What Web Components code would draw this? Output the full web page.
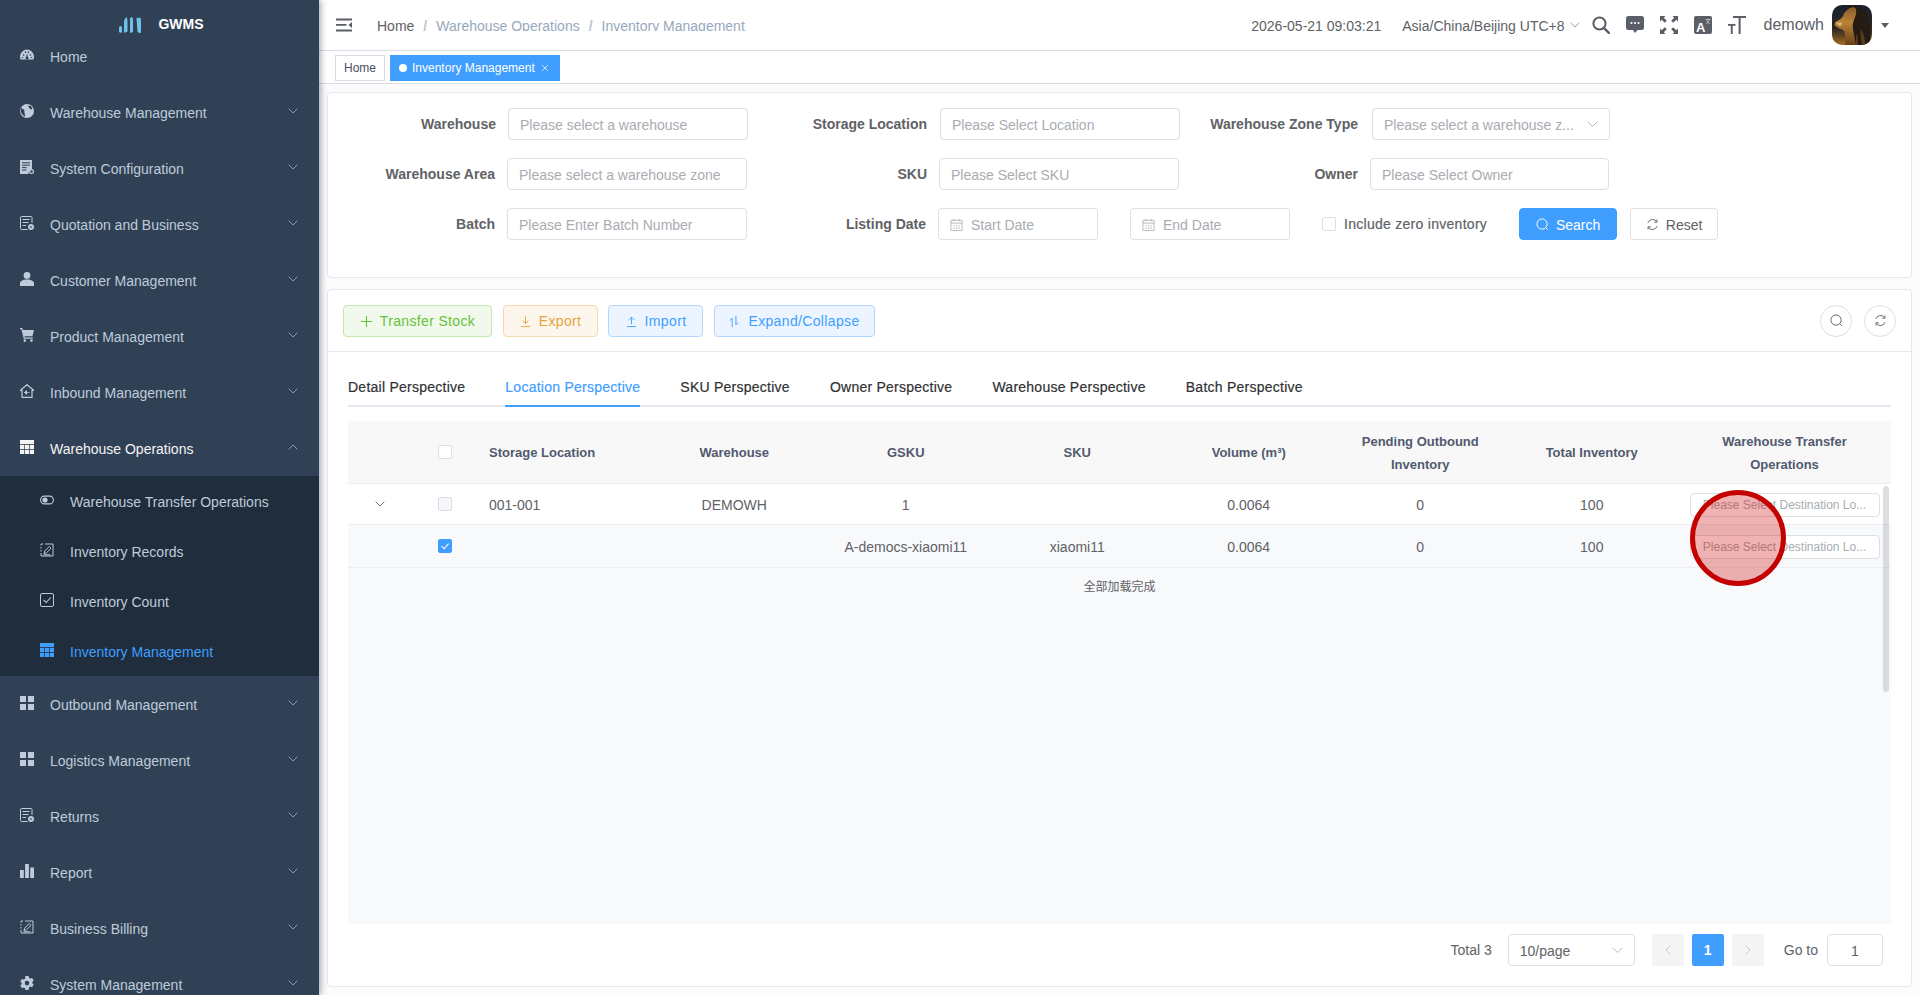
<!DOCTYPE html>
<html lang="en">
<head>
<meta charset="utf-8">
<title>GWMS - Inventory Management</title>
<style>
  html, body { margin: 0; height: 100%; overflow: hidden; }
  body { font-family: "Liberation Sans", "Noto Sans CJK SC", sans-serif; font-size: 14px; color: #606266; }
</style>
</head>
<body>
<gw-app></gw-app>

<script>
const ICONS = {
  gauge: [14, 14, '<path d="M7 1.600a7 7 0 0 0-7 7c0 1.100.2 2 .6 3h12.800c.4-1 .6-1.900.6-3a7 7 0 0 0-7-7z"/><path d="M7 11V6.500M3 6.500l1.200 1M11 6.500 9.800 7.500M1.800 9.500h1.400M10.800 9.500h1.400M5.300 3.400 5.800 5M8.700 3.400 8.200 5" stroke="#304156" stroke-width="1.100"/><circle cx="7" cy="10" r="1.500" fill="#304156"/>'],
  globe: [14, 14, '<circle cx="7" cy="7" r="7"/><path d="M3.800 1.200C2.800 2 1.700 3 1.600 3.700c0 .8 1 1.200 1.800 1.600 1 .5 1.200 1.300 1 2.200-.2 1 .2 1.800.5 2.700.2.700.2 1.500.1 2.300C2.800 11.300 1 9.300.7 7 .4 4.700 1.700 2.400 3.800 1.200zM8.200 1.600c.8.400 1.600.500 2.400.200.800.800 1.500 2 1.700 3.300-.8.400-1.700.300-2.300-.400-.7-.8-1.900-1.500-1.800-3.100z" fill="#304156"/>'],
  server: [14, 14, '<path d="M0 0h12v9.500a4 4 0 0 0-3.500 4.500H0z"/><path d="M2 2.800h8M2 5.200h8M2 7.600h4.500M2 10h4.500" stroke="#304156" stroke-width="1"/><circle cx="11.500" cy="11.500" r="1.900" fill="none" stroke="currentColor" stroke-width="1.200"/>'],
  bill: [14, 14, '<path d="M7.500 13.500H1.500a1 1 0 0 1-1-1v-11a1 1 0 0 1 1-1h9.500a1 1 0 0 1 1 1V7" fill="none" stroke="currentColor"/><path d="M2.500 3.500h7M2.500 6.500h6M2.500 9.500h3.500" stroke="currentColor" fill="none"/><circle cx="11" cy="11" r="3"/><path d="M9.800 11h2.400" stroke="#304156"/>'],
  user: [14, 14, '<circle cx="7" cy="3.400" r="3.400"/><path d="M0 14v-2.500c0-2.200 2.500-3.900 7-3.900s7 1.700 7 3.900V14z"/>'],
  cart: [14, 14, '<path d="M0 0h2.300l.6 2H14l-1.600 6.200H4.500l.3 1.300h8v1.300H3.700L1.400 1.300H0z"/><circle cx="4.800" cy="12.600" r="1.300"/><circle cx="11.500" cy="12.600" r="1.300"/>'],
  inbound: [14, 14, '<path d="M7 .7.300 6.300h1.700V13.400h10V6.300h1.700z" fill="none" stroke="currentColor" stroke-width="1.200"/><path d="M4.500 8.500h5M4.500 8.500l2-2v4z" stroke="currentColor" fill="currentColor" stroke-width=".8"/>'],
  table: [14, 14, '<rect width="14" height="4"/><rect y="4.800" width="4.200" height="4.200"/><rect x="4.900" y="4.800" width="4.200" height="4.200"/><rect x="9.800" y="4.800" width="4.200" height="4.200"/><rect y="9.800" width="4.200" height="4.200"/><rect x="4.900" y="9.800" width="4.200" height="4.200"/><rect x="9.800" y="9.800" width="4.200" height="4.200"/>'],
  toggle: [14, 14, '<rect x=".6" y="3.100" width="12.800" height="7.800" rx="3.900" fill="none" stroke="currentColor" stroke-width="1.100"/><circle cx="5" cy="7" r="2.600"/>'],
  edit: [14, 14, '<path d="M5 1H13v12H1V10M1 8.500V7M1 5.500V4M1 2.500V1h2" fill="none" stroke="currentColor" stroke-width="1"/><path d="M4 10.500l.6-2.400 4.600-4.600 1.800 1.800-4.600 4.600zM3.500 11.800h7" fill="none" stroke="currentColor" stroke-width="1"/>'],
  check: [14, 14, '<rect x=".5" y=".5" width="13" height="13" rx="1.500" fill="none" stroke="currentColor"/><path d="M3.500 6.800 6.200 9.500l4.500-5" fill="none" stroke="currentColor" stroke-width="1.100"/>'],
  grid: [14, 14, '<rect width="6" height="6"/><rect x="8" width="6" height="6"/><rect y="8" width="6" height="6"/><rect x="8" y="8" width="6" height="6"/>'],
  bars: [14, 14, '<rect y="6" width="3.800" height="8"/><rect x="5.100" width="3.800" height="14"/><rect x="10.200" y="3.500" width="3.800" height="10.500"/>'],
  gear: [14, 14, '<path fill-rule="evenodd" d="M5.400 0h3.200l.4 1.900 1.300.7 1.800-.7 1.600 2.700-1.400 1.300v1.400l1.400 1.300-1.600 2.700-1.800-.7-1.300.7L8.600 14H5.400L5 12.300l-1.300-.7-1.800.7L.3 9.600 1.700 8.300V6.900L.3 5.600 1.900 2.900l1.800.7L5 2.900zM7 4.800a2.300 2.300 0 1 0 0 4.600 2.300 2.300 0 0 0 0-4.600z"/>'],
  down: [10, 6, '<path d="M.7.7 5 5 9.300.7" fill="none" stroke="currentColor" stroke-width=".9"/>'],
  up: [10, 6, '<path d="M.7 5.300 5 1l4.300 4.300" fill="none" stroke="currentColor" stroke-width=".9"/>'],
  left: [6, 10, '<path d="M5.300.7 1 5l4.300 4.300" fill="none" stroke="currentColor" stroke-width=".9"/>'],
  right: [6, 10, '<path d="M.7.7 5 5 .7 9.300" fill="none" stroke="currentColor" stroke-width=".9"/>'],
  hamburger: [16, 14, '<path d="M0 .6h16v1.800H0zM0 11.600h16v1.800H0zM0 6h10.500v1.800H0z"/><path d="M16 4v6l-3.600-3z"/>'],
  search: [18, 18, '<circle cx="7.500" cy="7.500" r="6.100" fill="none" stroke="currentColor" stroke-width="2"/><path d="m11.800 11.800 5 5" stroke="currentColor" stroke-width="2.400" stroke-linecap="round"/>'],
  chat: [18, 18, '<path d="M2.500 0h13A2.500 2.500 0 0 1 18 2.500v9a2.500 2.500 0 0 1-2.500 2.500h-4L9 17l-2-3H2.500A2.500 2.500 0 0 1 0 11.500v-9A2.500 2.500 0 0 1 2.500 0z"/><circle cx="5.500" cy="7" r="1.100" fill="#fff"/><circle cx="9" cy="7" r="1.100" fill="#fff"/><circle cx="12.500" cy="7" r="1.100" fill="#fff"/>'],
  screen: [18, 18, '<path d="M0 0h5.500L3.800 1.700 6.800 4.800 4.800 6.800 1.700 3.800 0 5.500zM18 0v5.500l-1.700-1.700-3.100 3-2-2 3-3.100L12.500 0zM0 18v-5.500l1.700 1.700 3.100-3 2 2-3 3.100L5.500 18zM18 18h-5.500l1.700-1.700-3-3.100 2-2 3.100 3 1.700-1.700z"/>'],
  translate: [18, 18, '<rect width="18" height="18" rx="2"/><text x="2" y="15.500" font-size="13" font-weight="700" font-family="Liberation Sans, sans-serif" fill="#fff">A</text><path d="M11.500 3.500h5M14 2.500v1M12.300 8l3.500-4.500M12.500 4.500 16 8" stroke="#c8cad0" stroke-width=".8" fill="none"/>'],
  textsize: [18, 18, '<rect x="5" y="0" width="13" height="2"/><rect x="10.600" y="0" width="2" height="18"/><rect x="0" y="8" width="7.500" height="1.800"/><rect x="2.800" y="8" width="1.900" height="10"/>'],
  plus: [14, 14, '<path d="M7 1v12M1 7h12" fill="none" stroke="currentColor" stroke-width="1.200"/>'],
  download: [14, 14, '<path d="M7 1.500v7.500M3.800 6 7 9.200 10.200 6M2 12.500h10" fill="none" stroke="currentColor" stroke-width="1"/>'],
  upload: [14, 14, '<path d="M7 2.500V10M3.800 5.500 7 2.300l3.200 3.200M2 12.500h10" fill="none" stroke="currentColor" stroke-width="1"/>'],
  sort: [14, 14, '<path d="M4.500 13V3.500L2 6M8.500 1v9.500L11 8" fill="none" stroke="currentColor" stroke-width="1"/>'],
  lens: [14, 14, '<circle cx="6.500" cy="6.500" r="5.500" fill="none" stroke="currentColor" stroke-width="1"/><path d="m10.500 10.500 2.300 2.300" stroke="currentColor" stroke-width="1"/>'],
  refresh: [14, 14, '<path d="M2 5.300A5.300 5.300 0 0 1 11.500 4M12 8.700A5.300 5.300 0 0 1 2.500 10" fill="none" stroke="currentColor" stroke-width="1"/><path d="M11.800 1.500v3H8.800M2.200 12.500v-3h3" fill="none" stroke="currentColor" stroke-width="1"/>'],
  calendar: [14, 14, '<path d="M1 2.500h12v11H1zM1 5.500h12M4 1v2.500M10 1v2.500" fill="none" stroke="currentColor" stroke-width="1"/><path d="M3.500 7.700h1.500v1.200H3.500zM6.300 7.700h1.500v1.200H6.300zM9 7.700h1.500v1.200H9zM3.500 10.300h1.500v1.200H3.500zM6.300 10.300h1.500v1.200H6.300zM9 10.300h1.500v1.200H9z"/>'],
  close: [10, 10, '<path d="m1.500 1.500 7 7M8.500 1.500l-7 7" fill="none" stroke="currentColor" stroke-width=".9"/>'],
  tick: [14, 14, '<path d="M3 7.200 6 10.200l5.200-6" fill="none" stroke="currentColor" stroke-width="1.300"/>'],
};

class GwIcon extends HTMLElement {
  connectedCallback() {
    const [w, h, body] = ICONS[this.getAttribute('name')];
    const scale = +this.getAttribute('size') || w;
    const root = this.attachShadow({ mode: 'open' });
    root.innerHTML = `
      <style>
        :host { display: inline-flex; flex: none; }
        svg { display: block; fill: currentColor; }
      </style>
      <svg width="${scale}" height="${scale * h / w}" viewBox="0 0 ${w} ${h}">${body}</svg>`;
  }
}

class GwMenuItem extends HTMLElement {
  connectedCallback() {
    const root = this.attachShadow({ mode: 'open' });
    const arrow = this.getAttribute('arrow');
    root.innerHTML = `
      <style>
        :host {
          display: flex;
          align-items: center;
          height: 56px;
          padding: 0 21px 0 20px;
          color: #bfcbd9;
          flex: none;
        }
        :host([open]) { color: #f4f4f5; }
        :host([sub]) { height: 50px; padding-left: 40px; }
        :host([active]) { color: #409eff; }
        gw-icon { margin-right: 16px; position: relative; top: -1px; }
        .label { flex: 1; white-space: nowrap; padding-top: 1px; }
        .arrow { color: #97a8be; position: relative; top: -1px; }
      </style>
      <gw-icon name="${this.getAttribute('icon')}"></gw-icon>
      <span class="label"><slot></slot></span>
      ${arrow ? `<gw-icon class="arrow" style="margin:0" name="${arrow}"></gw-icon>` : ''}`;
  }
}

class GwSidebar extends HTMLElement {
  constructor() {
    super();
    const root = this.attachShadow({ mode: 'open' });
    const item = (icon, label, open) =>
      `<gw-menu-item icon="${icon}" arrow="${open ? 'up' : 'down'}" ${open ? 'open' : ''}>${label}</gw-menu-item>`;
    const sub = (icon, label, active) =>
      `<gw-menu-item sub icon="${icon}" ${active ? 'active' : ''}>${label}</gw-menu-item>`;
    root.innerHTML = `
      <style>
        :host {
          display: flex;
          flex-direction: column;
          width: 319px;
          height: 995px;
          flex: none;
          overflow: hidden;
          background: #304156;
          box-shadow: 2px 0 6px rgba(0, 21, 41, .35);
          position: relative;
          z-index: 2;
        }
        .logo {
          display: flex;
          align-items: center;
          justify-content: center;
          gap: 17px;
          height: 48px;
          margin-bottom: -20px;
          padding-left: 4px;
          box-sizing: border-box;
          flex: none;
          color: #fff;
          font-weight: 700;
          font-size: 14px;
        }
        .logo svg { position: relative; top: 1px; }
        .sub { background: #1f2d3d; flex: none; }
      </style>
      <div class="logo">
        <svg width="22" height="16" viewBox="0 0 22 16" fill="#6ec1e8">
          <path d="M0 11c0-1 .8-2 1.800-2S3 10 3 11v3.500c0 .8-.5 1.300-1.200 1.300S0 15.300 0 14.500z"/>
          <path d="M5 5.500C5 3 6 1 7.500 0 8.300 1 8.500 3 8.500 5v9.500c-1.500 1-2.500 1-3.500 1.300z"/>
          <path d="M11 2C11 1 12 .3 13 0c.8.800 1 2 1 3v12c-1 .5-2 .8-3 1z"/>
          <path d="M17.500 1c1.500-.5 3-.5 4 0 .4 1 .5 2 .5 3v12c-1.500 0-3-.5-3.500-1.500z"/>
        </svg>
        <span>GWMS</span>
      </div>
      <gw-menu-item icon="gauge">Home</gw-menu-item>
      ${item('globe', 'Warehouse Management')}
      ${item('server', 'System Configuration')}
      ${item('bill', 'Quotation and Business')}
      ${item('user', 'Customer Management')}
      ${item('cart', 'Product Management')}
      ${item('inbound', 'Inbound Management')}
      ${item('table', 'Warehouse Operations', true)}
      <div class="sub">
        ${sub('toggle', 'Warehouse Transfer Operations')}
        ${sub('edit', 'Inventory Records')}
        ${sub('check', 'Inventory Count')}
        ${sub('table', 'Inventory Management', true)}
      </div>
      ${item('grid', 'Outbound Management')}
      ${item('grid', 'Logistics Management')}
      ${item('bill', 'Returns')}
      ${item('bars', 'Report')}
      ${item('edit', 'Business Billing')}
      ${item('gear', 'System Management')}`;
  }
}

class GwNavbar extends HTMLElement {
  constructor() {
    super();
    const root = this.attachShadow({ mode: 'open' });
    root.innerHTML = `
      <style>
        :host {
          display: flex;
          align-items: center;
          height: 50px;
          flex: none;
          padding: 0 31px 0 17px;
          background: #fff;
          border-bottom: 1px solid #d8dce5;
          color: #5a5e66;
        }
        .crumbs {
          display: flex;
          margin-left: 25px;
          height: 12px;
          line-height: 14px;
          overflow: hidden;
          flex: 1;
          white-space: nowrap;
          color: #97a8be;
        }
        .crumbs b { font-weight: 400; color: #606266; }
        .crumbs i { font-style: normal; font-weight: 700; color: #c0c4cc; margin: 0 9px; }
        .time { color: #606266; white-space: nowrap; padding-top: 2px; }
        .zone { color: #606266; margin-left: 21px; white-space: nowrap; padding-top: 2px; }
        .zone-arrow { margin: 0 12px 0 5px; color: #909399; }
        .tools { display: flex; align-items: center; gap: 16px; }
        .name { font-size: 16px; margin-left: 18px; color: #5a5e66; }
        .avatar {
          width: 40px;
          height: 40px;
          margin-left: 8px;
          border-radius: 10px;
          overflow: hidden;
          flex: none;
        }
        .caret {
          width: 0;
          height: 0;
          margin-left: 9px;
          border: 4px solid transparent;
          border-top: 5px solid #5a5e66;
          border-bottom: 0;
        }
      </style>
      <gw-icon name="hamburger"></gw-icon>
      <nav class="crumbs"><b>Home</b><i>/</i>Warehouse Operations<i>/</i>Inventory Management</nav>
      <span class="time">2026-05-21 09:03:21</span>
      <span class="zone">Asia/China/Beijing UTC+8</span>
      <gw-icon class="zone-arrow" name="down"></gw-icon>
      <div class="tools">
        <gw-icon name="search"></gw-icon>
        <gw-icon name="chat"></gw-icon>
        <gw-icon name="screen"></gw-icon>
        <gw-icon name="translate"></gw-icon>
        <gw-icon name="textsize"></gw-icon>
      </div>
      <span class="name">demowh</span>
      <div class="avatar">
        <svg width="40" height="40" viewBox="0 0 40 40">
          <defs>
            <linearGradient id="sky" x1="0" y1="0" x2="0" y2="1">
              <stop offset="0" stop-color="#18202c"/>
              <stop offset=".6" stop-color="#2c2a24"/>
              <stop offset="1" stop-color="#a56c22"/>
            </linearGradient>
            <linearGradient id="fur" x1="0" y1="0" x2="0" y2="1">
              <stop offset="0" stop-color="#8a5c28"/>
              <stop offset=".4" stop-color="#b98237"/>
              <stop offset="1" stop-color="#6a3f18"/>
            </linearGradient>
          </defs>
          <rect width="40" height="40" fill="url(#sky)"/>
          <path d="M17 1C25-1 36 6 38 16c1 9 1 18-1 24H20C22 28 20 14 17 1z" fill="#241b15"/>
          <path d="M29 24c3 5 4 10 4 16h-3c-1-5-2-11-1-16zM24 28c2 4 2 8 2 12h-2z" fill="#5a3d18"/>
          <path d="M18 3c5-2 7 1 6 6-1 5-4 8-3 15 1 6 2 11 3 16H13c1-5 1-10-1-14-2-2-5-2-7-4-2-1-3-2-2-4 2-3 6-3 8-7 1-4 4-6 7-8z" fill="url(#fur)"/>
          <path d="M4 17c2 1 4 1 6 0l-1 4c-2 0-4-1-5-4z" fill="#d9b47a"/>
        </svg>
      </div>
      <span class="caret"></span>`;
  }
}

class GwTags extends HTMLElement {
  constructor() {
    super();
    const root = this.attachShadow({ mode: 'open' });
    root.innerHTML = `
      <style>
        :host {
          display: flex;
          align-items: center;
          gap: 5px;
          height: 33px;
          box-sizing: border-box;
          flex: none;
          padding: 2px 0 0 16px;
          font-size: 12px;
          background: #fff;
          border-bottom: 1px solid #d8dce5;
        }
        span {
          display: inline-flex;
          align-items: center;
          height: 26px;
          box-sizing: border-box;
          padding: 0 8px;
          border: 1px solid #d8dce5;
          color: #495060;
        }
        .on { background: #409eff; border-color: #409eff; color: #fff; padding-right: 10px; }
        .on::before {
          content: "";
          width: 8px;
          height: 8px;
          margin-right: 5px;
          border-radius: 50%;
          background: #fff;
        }
        gw-icon { margin-left: 6px; }
      </style>
      <span>Home</span>
      <span class="on">Inventory Management<gw-icon name="close" size="8"></gw-icon></span>`;
  }
}

class GwInput extends HTMLElement {
  connectedCallback() {
    const root = this.attachShadow({ mode: 'open' });
    const icon = this.getAttribute('icon');
    const trail = this.getAttribute('trail');
    root.innerHTML = `
      <style>
        :host {
          display: flex;
          align-items: center;
          height: var(--input-height, 32px);
          box-sizing: border-box;
          flex: none;
          padding: 0 var(--input-pad-right, 11px) 0 var(--input-pad, 11px);
          background: #fff;
          border: 1px solid #dcdfe6;
          border-radius: 4px;
          color: var(--input-color, #a9acb2);
          font-size: var(--input-font, 14px);
          font-weight: 400;
          white-space: nowrap;
          overflow: hidden;
        }
        .text { flex: 1; overflow: hidden; text-overflow: ellipsis; padding-top: 1px; }
        .lead { margin-right: 8px; color: #b4b7bd; }
        .trail { margin-left: 8px; color: #b4b7bd; }
      </style>
      ${icon ? `<gw-icon class="lead" name="${icon}" size="13"></gw-icon>` : ''}
      <span class="text"><slot></slot></span>
      ${trail ? `<gw-icon class="trail" name="${trail}" size="11"></gw-icon>` : ''}`;
  }
}

class GwField extends HTMLElement {
  connectedCallback() {
    const root = this.attachShadow({ mode: 'open' });
    const attr = n => this.getAttribute(n);
    const trail = attr('trail') ? `trail="${attr('trail')}"` : '';
    root.innerHTML = `
      <style>
        :host { display: flex; align-items: center; flex: none; }
        label {
          text-align: right;
          font-weight: 700;
          color: #606266;
          white-space: nowrap;
        }
      </style>
      <label style="width:${attr('lw')}px;margin-right:${attr('gap') || 12}px">${attr('label')}</label>
      <gw-input style="width:${attr('w') || 240}px" ${trail}><slot></slot></gw-input>`;
  }
}

class GwButton extends HTMLElement {
  connectedCallback() {
    const root = this.attachShadow({ mode: 'open' });
    const icon = this.getAttribute('icon');
    root.innerHTML = `
      <style>
        :host {
          display: inline-flex;
          align-items: center;
          justify-content: center;
          gap: 7px;
          height: 32px;
          box-sizing: border-box;
          padding-top: 1px;
          flex: none;
          font-size: 14px;
          white-space: nowrap;
          border: 1px solid #dcdfe6;
          border-radius: 4px;
          background: #fff;
          color: #606266;
        }
        :host([kind="primary"]) { background: #409eff; border-color: #409eff; color: #fff; }
        :host([kind="green"]) { background: #f0f9eb; border-color: #c2e7b0; color: #67c23a; }
        :host([kind="orange"]) { background: #fdf6ec; border-color: #f5dab1; color: #e6a23c; }
        :host([kind="blue"]) { background: #ecf5ff; border-color: #b3d8ff; color: #409eff; }
        :host([round]) { width: 32px; padding: 0; border-radius: 50%; }
      </style>
      ${icon ? `<gw-icon name="${icon}" size="13"></gw-icon>` : ''}<slot></slot>`;
  }
}

class GwFilter extends HTMLElement {
  constructor() {
    super();
    const root = this.attachShadow({ mode: 'open' });
    root.innerHTML = `
      <style>
        :host {
          display: flex;
          flex-direction: column;
          gap: 18px;
          height: 186px;
          box-sizing: border-box;
          flex: none;
          padding-top: 15px;
          background: #fff;
          border: 1px solid #e4e7ed;
          border-radius: 4px;
        }
        .row { display: flex; align-items: center; }
        .check {
          display: flex;
          align-items: center;
          gap: 8px;
          margin: 0 32px;
          white-space: nowrap;
          letter-spacing: .28px;
          -webkit-text-stroke: .2px #606266;
          color: #606266;
        }
        .check i {
          width: 14px;
          height: 14px;
          box-sizing: border-box;
          border: 1px solid #dcdfe6;
          border-radius: 2px;
        }
        .dates { display: flex; gap: 32px; }
        gw-button + gw-button { margin-left: 13px; }
      </style>
      <div class="row">
        <gw-field lw="168" label="Warehouse">Please select a warehouse</gw-field>
        <gw-field lw="179" gap="13" label="Storage Location">Please Select Location</gw-field>
        <gw-field lw="178" gap="14" w="238" trail="down" label="Warehouse Zone Type">Please select a warehouse z...</gw-field>
      </div>
      <div class="row">
        <gw-field lw="167" label="Warehouse Area">Please select a warehouse zone</gw-field>
        <gw-field lw="180" label="SKU">Please Select SKU</gw-field>
        <gw-field lw="179" w="239" label="Owner">Please Select Owner</gw-field>
      </div>
      <div class="row">
        <gw-field lw="167" label="Batch">Please Enter Batch Number</gw-field>
        <label style="width:179px;margin-right:12px;text-align:right;font-weight:700">Listing Date</label>
        <div class="dates">
          <gw-input icon="calendar" style="width:160px">Start Date</gw-input>
          <gw-input icon="calendar" style="width:160px">End Date</gw-input>
        </div>
        <div class="check"><i></i>Include zero inventory</div>
        <gw-button kind="primary" icon="lens" style="width:98px">Search</gw-button>
        <gw-button icon="refresh" style="width:88px">Reset</gw-button>
      </div>`;
  }
}

class GwTabs extends HTMLElement {
  constructor() {
    super();
    const root = this.attachShadow({ mode: 'open' });
    const names = ['Detail', 'Location', 'SKU', 'Owner', 'Warehouse', 'Batch'];
    root.innerHTML = `
      <style>
        :host {
          display: flex;
          gap: 40px;
          height: 40px;
          box-sizing: border-box;
          flex: none;
          margin: 15px 20px 0;
          border-bottom: 2px solid #e4e7ed;
          letter-spacing: .25px;
          color: #303133;
        }
        span {
          height: 40px;
          line-height: 41px;
          box-sizing: border-box;
          white-space: nowrap;
          -webkit-text-stroke: .2px currentColor;
        }
        .on { color: #409eff; border-bottom: 2px solid #409eff; }
      </style>
      ${names.map((n, i) => `<span class="${i === 1 ? 'on' : ''}">${n} Perspective</span>`).join('')}`;
  }
}

class GwTable extends HTMLElement {
  constructor() {
    super();
    const root = this.attachShadow({ mode: 'open' });
    const cols = ['Storage Location', 'Warehouse', 'GSKU', 'SKU', 'Volume (m³)', 'Pending Outbound Inventory', 'Total Inventory', 'Warehouse Transfer Operations'];
    const cell = (text, cls = '') => `<div class="cell ${cls}">${text}</div>`;
    const dest = '<gw-input>Please Select Destination Lo...</gw-input>';
    root.innerHTML = `
      <style>
        :host {
          display: flex;
          flex-direction: column;
          flex: 1;
          margin: 14px 20px 0;
          background: #f8f9fb;
          position: relative;
          overflow: hidden;
          --input-height: 24px;
          --input-font: 12px;
          --input-pad: 7px;
          --input-pad-right: 7px;
          --input-color: #a9acb2;
        }
        .row {
          display: grid;
          grid-template-columns: 64px 65px repeat(7, 171.5px) 214px;
          align-items: center;
          flex: none;
          border-bottom: 1px solid #ebeef5;
          color: #606266;
        }
        .head {
          height: 63px;
          box-sizing: border-box;
          background: #f8f8f9;
          font-size: 13px;
          font-weight: 700;
          line-height: 23px;
          color: #515a6e;
        }
        .first { height: 40px; background: #fff; }
        .second { height: 42px; }
        .cell { text-align: center; padding: 1px 12px 0; }
        .left { text-align: left; }
        .box {
          display: flex;
          align-items: center;
          justify-content: center;
          width: 14px;
          height: 14px;
          margin: 0 auto;
          box-sizing: border-box;
          background: #fff;
          border: 1px solid #dcdfe6;
          border-radius: 2px;
          color: #fff;
        }
        .muted { background: #f5f7fa; }
        .checked { background: #409eff; border-color: #409eff; }
        .more {
          height: 39px;
          line-height: 39px;
          text-align: center;
          font-size: 12px;
          color: #606266;
        }
        .bar {
          position: absolute;
          right: 2px;
          top: 65px;
          width: 6px;
          height: 206px;
          border-radius: 3px;
          background: rgba(144, 147, 153, .3);
        }
        gw-icon { display: flex; justify-content: center; color: #606266; }
      </style>
      <div class="row head">
        <div></div><div class="box"></div>
        ${cols.map((c, i) => cell(c, i === 0 ? 'left' : '')).join('')}
      </div>
      <div class="row first">
        <gw-icon name="down"></gw-icon><div class="box muted"></div>
        ${cell('001-001', 'left')}${cell('DEMOWH')}${cell('1')}${cell('')}${cell('0.0064')}${cell('0')}${cell('100')}${cell(dest)}
      </div>
      <div class="row second">
        <div></div><div class="box checked"><gw-icon name="tick" size="12" style="color:#fff"></gw-icon></div>
        ${cell('', 'left')}${cell('')}${cell('A-democs-xiaomi11')}${cell('xiaomi11')}${cell('0.0064')}${cell('0')}${cell('100')}${cell(dest)}
      </div>
      <div class="more">全部加载完成</div>
      <div class="bar"></div>`;
  }
}

class GwPager extends HTMLElement {
  constructor() {
    super();
    const root = this.attachShadow({ mode: 'open' });
    root.innerHTML = `
      <style>
        :host {
          display: flex;
          align-items: center;
          justify-content: flex-end;
          height: 32px;
          flex: none;
          margin: 10px 28px 20px 0;
          color: #606266;
          --input-color: #606266;
        }
        .size { width: 127px; margin: 0 17px 0 16px; }
        .btn {
          display: flex;
          align-items: center;
          justify-content: center;
          width: 32px;
          height: 32px;
          margin-right: 8px;
          border-radius: 2px;
          background: #f4f4f5;
          color: #c0c4cc;
        }
        .on { background: #409eff; color: #fff; font-weight: 700; }
        .goto { margin: 0 9px 0 20px; }
        .jump { width: 56px; --input-pad: 0px; --input-pad-right: 0px; text-align: center; }
      </style>
      <span>Total 3</span>
      <gw-input class="size" trail="down">10/page</gw-input>
      <div class="btn"><gw-icon name="left"></gw-icon></div>
      <div class="btn on">1</div>
      <div class="btn" style="margin-right:0"><gw-icon name="right"></gw-icon></div>
      <span class="goto">Go to</span>
      <gw-input class="jump">1</gw-input>`;
  }
}

class GwList extends HTMLElement {
  constructor() {
    super();
    const root = this.attachShadow({ mode: 'open' });
    root.innerHTML = `
      <style>
        :host {
          display: flex;
          flex-direction: column;
          flex: none;
          height: 698px;
          box-sizing: border-box;
          background: #fff;
          border: 1px solid #e4e7ed;
          border-radius: 4px;
        }
        .tools {
          display: flex;
          align-items: center;
          gap: 10.5px;
          height: 61px;
          flex: none;
          padding: 0 15px;
          border-bottom: 1px solid #e4e7ed;
        }
        .tools > gw-button { letter-spacing: .35px; }
        .spacer { flex: 1; }
        .round { display: flex; gap: 12px; }
      </style>
      <div class="tools">
        <gw-button kind="green" icon="plus" style="width:149px">Transfer Stock</gw-button>
        <gw-button kind="orange" icon="download" style="width:95px">Export</gw-button>
        <gw-button kind="blue" icon="upload" style="width:95px">Import</gw-button>
        <gw-button kind="blue" icon="sort" style="width:161px">Expand/Collapse</gw-button>
        <span class="spacer"></span>
        <div class="round">
          <gw-button round icon="lens"></gw-button>
          <gw-button round icon="refresh"></gw-button>
        </div>
      </div>
      <gw-tabs></gw-tabs>
      <gw-table></gw-table>
      <gw-pager></gw-pager>`;
  }
}

class GwApp extends HTMLElement {
  constructor() {
    super();
    const root = this.attachShadow({ mode: 'open' });
    root.innerHTML = `
      <style>
        :host {
          display: flex;
          width: 1920px;
          height: 995px;
          overflow: hidden;
          position: relative;
          background: #fbfbfc;
        }
        .main { display: flex; flex-direction: column; flex: 1; min-width: 0; }
        .page { display: flex; flex-direction: column; gap: 11px; padding: 8px 8px 0; }
        .pointer {
          position: absolute;
          left: 1690px;
          top: 490px;
          width: 96px;
          height: 96px;
          box-sizing: border-box;
          border: 5px solid #c40000;
          border-radius: 50%;
          background: rgba(204, 0, 0, .3);
          z-index: 5;
        }
      </style>
      <gw-sidebar></gw-sidebar>
      <div class="main">
        <gw-navbar></gw-navbar>
        <gw-tags></gw-tags>
        <div class="page">
          <gw-filter></gw-filter>
          <gw-list></gw-list>
        </div>
      </div>
      <div class="pointer"></div>`;
  }
}

customElements.define('gw-icon', GwIcon);
customElements.define('gw-menu-item', GwMenuItem);
customElements.define('gw-sidebar', GwSidebar);
customElements.define('gw-navbar', GwNavbar);
customElements.define('gw-tags', GwTags);
customElements.define('gw-input', GwInput);
customElements.define('gw-field', GwField);
customElements.define('gw-button', GwButton);
customElements.define('gw-filter', GwFilter);
customElements.define('gw-tabs', GwTabs);
customElements.define('gw-table', GwTable);
customElements.define('gw-pager', GwPager);
customElements.define('gw-list', GwList);
customElements.define('gw-app', GwApp);
</script>
</body>
</html>
